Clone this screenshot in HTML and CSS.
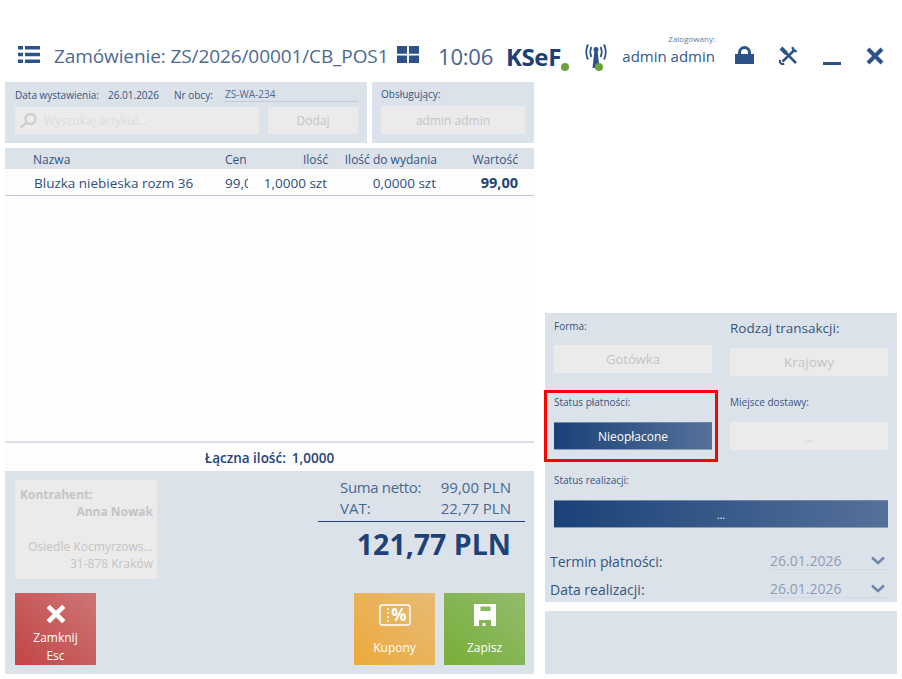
FILE: index.html
```html
<!DOCTYPE html>
<html lang="pl">
<head>
<meta charset="utf-8">
<title>Zamówienie</title>
<link rel="stylesheet" href="styles.css">
</head>
<body>
<header class="topbar">
  <svg class="ic-menu" viewBox="0 0 22 17" width="22" height="17"><path d="M0 0h5v3.4H0zM7 0h15v3.4H7zM0 6.8h5v3.4H0zM7 6.8h15v3.4H7zM0 13.6h5V17H0zM7 13.6h15V17H7z"/></svg>
  <h1 class="title">Zamówienie: ZS/2026/00001/CB_POS1</h1>
  <svg class="ic-win" viewBox="0 0 22 17" width="22" height="17"><path d="M0 0h10v7.8H0zM12 0h10v7.8H12zM0 9.4h10V17H0zM12 9.4h10V17H12z"/></svg>
  <span class="clock">10:06</span>
  <span class="ksef">KSeF<i class="dot"></i></span>
  <span class="signal">
    <svg viewBox="0 0 22 26" width="22" height="26"><path class="wave" d="M6.500 5Q4 10 6.500 15M3 2.500Q-.5 10 3 17.500M15.500 5Q18 10 15.500 15M19 2.500Q22.500 10 19 17.500"/><circle cx="11" cy="7.500" r="2.500"/><path d="M9.500 8h3l2 18h-7z"/></svg>
    <i class="dot"></i>
  </span>
  <div class="user"><small>Zalogowany:</small><span>admin admin</span></div>
  <svg class="ic-lock" viewBox="0 0 19 18" width="19" height="18"><path d="M0 8h19v10H0z"/><path class="st" d="M4.500 9V6.500a5 5 0 0 1 10 0V9" fill="none"/></svg>
  <svg class="ic-tools" viewBox="0 0 19 19" width="19" height="19"><path class="st handle" d="M2 2L7.500 7.500" fill="none"/><path class="st" d="M7 7L17 17M16 3.500L3.500 15.500" fill="none"/><path class="st jaw" d="M17.800 5A3.300 3.300 0 0 1 13.800 1M1 13.800A3.300 3.300 0 0 0 5.200 18" fill="none"/></svg>
  <span class="ic-min"></span>
  <svg class="ic-x" viewBox="0 0 18 18" width="18" height="18"><path class="st" d="M2 2l14 14M16 2L2 16" fill="none"/></svg>
</header>

<main class="layout">
  <section class="left">
    <div class="filters">
      <div class="panel doc">
        <div class="meta">
          <label>Data wystawienia:</label><span class="metaval">26.01.2026</span>
          <label class="nr">Nr obcy:</label><span class="foreign">ZS-WA-234</span>
        </div>
        <div class="searchrow">
          <div class="field search">
            <svg viewBox="0 0 18 16" width="18" height="16"><circle cx="11.500" cy="6" r="5" fill="none"/><path d="M8 9.500L1.500 14.500"/></svg>
            <span>Wyszukaj artykuł...</span>
          </div>
          <div class="field add">Dodaj</div>
        </div>
      </div>
      <div class="panel staff">
        <label>Obsługujący:</label>
        <div class="field staffbox">admin admin</div>
      </div>
    </div>

    <div class="table">
      <div class="row head">
        <span class="c-name">Nazwa</span><span class="c-price">Cen</span><span class="c-qty">Ilość</span><span class="c-out">Ilość do wydania</span><span class="c-val">Wartość</span>
      </div>
      <div class="row item">
        <span class="c-name">Bluzka niebieska rozm 36</span><span class="c-price">99,00</span><span class="c-qty">1,0000 szt</span><span class="c-out">0,0000 szt</span><span class="c-val strong">99,00</span>
      </div>
      <div class="spacer"></div>
      <div class="totalqty"><b>Łączna ilość:</b><b>1,0000</b></div>
    </div>

    <div class="panel bottom">
      <div class="bottomtop">
        <div class="customer">
          <b class="lab">Kontrahent:</b>
          <b class="name">Anna Nowak</b>
          <span class="addr">Osiedle Kocmyrzows...</span>
          <span>31-878 Kraków</span>
        </div>
        <div class="sums">
          <div class="sumrow"><span class="sumlab">Suma netto:</span><span>99,00 PLN</span></div>
          <div class="sumrow"><span>VAT:</span><span>22,77 PLN</span></div>
          <div class="grand">121,77 PLN</div>
        </div>
      </div>
      <div class="actions">
        <button class="tile red">
          <svg viewBox="0 0 22 22" width="22" height="22"><path class="st" d="M2.500 2.500l17 17M19.500 2.500l-17 17" fill="none"/></svg>
          <span>Zamknij</span><span>Esc</span>
        </button>
        <div class="grow"></div>
        <button class="tile orange">
          <svg viewBox="0 0 32 22" width="32" height="22"><rect x="1" y="1" width="30" height="20" rx="2.500" fill="none"/><path d="M9 4v2M9 8v2M9 12v2M9 16v2" fill="none"/><text x="20" y="17" text-anchor="middle">%</text></svg>
          <span class="lbl">Kupony</span>
        </button>
        <button class="tile green">
          <svg viewBox="0 0 22 22" width="22" height="22"><path fill-rule="evenodd" d="M0 0h22v22H0zM6.500 2.500v4.500h10V2.500zM5 16v6h12v-6zM8.500 19h3v3h-3z"/></svg>
          <span class="lbl">Zapisz</span>
        </button>
      </div>
    </div>
  </section>

  <aside class="right">
    <div class="panel form">
      <div class="grid">
        <div class="cell">
          <label>Forma:</label>
          <div class="field wide">Gotówka</div>
        </div>
        <div class="cell">
          <label class="big">Rodzaj transakcji:</label>
          <div class="field wide kraj">Krajowy</div>
        </div>
        <div class="cell highlighted">
          <label>Status płatności:</label>
          <div class="blue">Nieopłacone</div>
        </div>
        <div class="cell">
          <label>Miejsce dostawy:</label>
          <div class="field wide dots">...</div>
        </div>
        <div class="cell full">
          <label>Status realizacji:</label>
          <div class="blue dots">...</div>
        </div>
      </div>
      <div class="daterow"><span>Termin płatności:</span><span class="date">26.01.2026<svg viewBox="0 0 14 9" width="14" height="9"><path d="M1 1.500l6 5.500 6-5.500" fill="none"/></svg></span></div>
      <div class="daterow"><span>Data realizacji:</span><span class="date">26.01.2026<svg viewBox="0 0 14 9" width="14" height="9"><path d="M1 1.500l6 5.500 6-5.500" fill="none"/></svg></span></div>
    </div>
    <div class="panel empty"></div>
  </aside>
</main>
</body>
</html>
```
FILE: styles.css
```css
* { box-sizing: border-box; }
html, body { margin: 0; padding: 0; }
body {
  width: 902px; height: 679px; overflow: hidden; background: #fff;
  font-family: "Open Sans", "Noto Sans", sans-serif; color: #1f4479;
  padding-top: 30px;
}
.topbar { height: 52px; display: flex; align-items: center; padding-left: 18px; position: relative; }
.topbar svg { flex: none; fill: #2c5288; }
.topbar .st { stroke: #2c5288; }
.ic-menu { margin-top: -4px; }
.title { margin: 0 0 0 14px; font-size: 19px; font-weight: 400; color: #4d6a92; width: 334px; white-space: nowrap; letter-spacing: -.1px; }
.ic-win { margin-left: 9px; margin-top: -3px; }
.clock { margin-left: 19px; font-size: 22px; color: #46648f; width: 56px; letter-spacing: -.2px; }
.ksef { position: relative; margin-left: 12px; font-size: 24px; font-weight: 700; color: #1c4075; width: 61px; letter-spacing: -.4px; padding-top: 1px; }
.dot { position: absolute; width: 8px; height: 8px; border-radius: 50%; background: #6f9f3d; }
.ksef .dot { right: -2px; bottom: 2px; }
.signal { position: relative; display: block; width: 22px; height: 26px; margin-left: 18px; margin-top: -2px; }
.signal .dot { left: 10px; bottom: -3px; }
.signal .wave { fill: none; stroke: #2c5288; stroke-width: 1.800; }
.user { display: flex; flex-direction: column; align-items: flex-end; width: 95px; margin-left: 13px; font-size: 15px; color: #36588a; line-height: 19px; margin-top: -3px; }
.user small { font-size: 8px; line-height: 9px; color: #62799c; margin-bottom: 4px; margin-top: -9px; }
.ic-lock { margin-left: 20px; margin-top: -3px; }
.ic-lock .st { stroke-width: 3; }
.ic-tools { margin-left: 25px; margin-top: -2px; }
.ic-tools .st { stroke-width: 2.500; }
.ic-tools .handle { stroke-width: 4; }
.ic-tools .jaw { stroke-width: 2.200; }
.ic-min { display: block; width: 18px; height: 3px; background: #2c5288; margin-left: 25px; margin-top: 15px; }
.ic-x { margin-left: 25px; margin-top: -1px; }
.ic-x .st { stroke-width: 4; }

.layout { display: flex; padding-left: 5px; }
.left { width: 529px; display: flex; flex-direction: column; }
.right { width: 352px; margin-left: 11px; padding-top: 231px; display: flex; flex-direction: column; }

.panel { background: #dce2ea; }
label { font-size: 10px; color: #35557f; }
.filters { display: flex; gap: 5px; height: 61px; }
.doc { width: 362px; padding: 5px 9px 5px 10px; }
.meta { display: flex; align-items: center; height: 15px; white-space: nowrap; font-size: 10px; }
.meta label { width: 93px; }
.meta .nr { width: 51px; }
.metaval { width: 66px; color: #35557f; }
.foreign { width: 135px; margin-left: -2px; padding-left: 2px; color: #4f6b92; font-size: 10px; border-bottom: 1px solid #c2cbd8; height: 15px; line-height: 15px; }
.searchrow { display: flex; gap: 9px; margin-top: 5px; }
.field { background: #ebebeb; color: #c4c4c4; display: flex; align-items: center; justify-content: center; font-size: 12px; }
.search { width: 244px; height: 27px; justify-content: flex-start; padding-left: 4px; gap: 7px; color: #dcdcdc; }
.search svg { stroke: #cfcfcf; stroke-width: 2.500; fill: none; }
.add { width: 90px; height: 27px; }
.staff { width: 162px; padding: 5px 9px; }
.staff label { display: block; height: 18px; line-height: 15px; }
.staffbox { height: 28px; width: 144px; margin-top: 1px; }

.table { height: 323px; margin-top: 5px; display: flex; flex-direction: column; background: #fdfdfd; }
.row { display: flex; align-items: center; flex: none; white-space: nowrap; }
.head { height: 21px; background: #dce2ea; font-size: 12px; color: #35557f; padding-top: 1px; }
.item { height: 27px; font-size: 13.500px; color: #2f4f7c; border-bottom: 1px solid #b9c6d8; padding-top: 1px; }
.c-name { width: 219px; padding-left: 28px; }
.item .c-name { padding-left: 29px; }
.c-price { width: 23px; overflow: hidden; margin-left: 1px; }
.c-qty { width: 80px; text-align: right; }
.item .c-qty { padding-right: 1px; }
.c-out { width: 109px; text-align: right; }
.item .c-out { padding-right: 1px; }
.c-val { width: 81px; text-align: right; }
.item .strong { font-weight: 700; color: #1f4479; font-size: 14.500px; }
.spacer { flex: 1; border-bottom: 2px solid #d8dfe8; }
.totalqty { height: 28px; display: flex; align-items: center; justify-content: center; gap: 6px; font-size: 13.500px; padding-top: 1px; color: #1f4479; }
.totalqty b { font-weight: 600; }

.bottom { height: 203px; padding: 9px 9px 9px 10px; display: flex; flex-direction: column; }
.bottomtop { display: flex; height: 113px; flex: none; }
.customer { width: 142px; height: 99px; background: #ebebeb; color: #c4c4c4; font-size: 12px; display: flex; flex-direction: column; align-items: flex-end; padding: 6px 4px 0 5px; line-height: 17px; }
.customer .lab { align-self: flex-start; }
.customer .addr { margin-top: 18px; }
.sums { margin-left: 161px; width: 207px; }
.sumrow { display: flex; justify-content: space-between; font-size: 15px; color: #4a688f; height: 21px; line-height: 21px; padding: 0 14px 0 22px; }
.sumrow:first-child { margin-top: -3px; }
.sumrow:nth-child(2) { border-bottom: 1px solid #1f4479; height: 24px; padding-bottom: 3px; }
.sumlab { letter-spacing: -.35px; }
.grand { font-size: 28.500px; font-weight: 700; text-align: right; padding-right: 14px; color: #1c4277; line-height: 44px; }
.actions { display: flex; gap: 9px; }
.grow { flex: 1; }
.tile { width: 81px; height: 72px; border: 0; padding: 0; font: inherit; font-size: 12px; color: #fff; display: flex; flex-direction: column; align-items: center; }
.tile svg { margin-top: 11px; }
.tile span { line-height: 17px; }
.tile.red { background: linear-gradient(45deg, #c34545, #cd7676); }
.tile.red span:first-of-type { margin-top: 5px; }
.tile.red span:last-of-type { line-height: 19px; }
.tile.red .st { stroke: #fff; stroke-width: 5; }
.tile.orange { background: linear-gradient(45deg, #eda93c, #e6bb75); }
.tile.orange svg { stroke: #fff; stroke-width: 1.500; fill: #fff; }
.tile.orange rect, .tile.orange path { stroke: #fff; }
.tile.orange text { font-size: 17px; font-weight: 700; fill: #fff; stroke: none; }
.tile.green { background: linear-gradient(45deg, #77ae38, #94bc6e); }
.tile.green svg { fill: #fff; }
.lbl { margin-top: 13px; }

.form { height: 289px; padding: 3px 9px 0 9px; }
.grid { display: grid; grid-template-columns: 158px 158px; column-gap: 18px; }
.cell { height: 76px; position: relative; }
.cell label { display: block; height: 30px; line-height: 20px; }
.cell label.big { font-size: 13.500px; line-height: 24px; height: 32px; color: #35557f; }
.cell:nth-child(1) label { height: 29px; }
.wide { height: 28px; font-size: 13px; }
.kraj { font-size: 13.500px; }
.full { grid-column: 1 / span 2; height: 79px; }
.full label { line-height: 24px; height: 32px; }
.blue { height: 28px; background: linear-gradient(90deg, #1a4278, #557199); color: #fff; font-size: 12px; display: flex; align-items: center; justify-content: center; border-top: 1px solid #6f87a8; border-bottom: 1px solid #8da0bc; }
.dots { align-items: flex-end; padding-bottom: 5px; font-size: 10px; }
.highlighted::after { content: ""; box-sizing: border-box; position: absolute; left: -10px; top: -2px; width: 174px; height: 72px; border: 3px solid #ff0000; pointer-events: none; }
.daterow { display: flex; justify-content: space-between; align-items: center; height: 28px; margin-left: -4px; font-size: 14px; color: #35557f; }
.date { display: flex; align-items: center; justify-content: space-between; width: 118px; color: #8d9db5; font-size: 14px; border-bottom: 1px solid #d2d9e3; height: 18px; padding-right: 3px; }
.date svg { stroke: #6e86a8; stroke-width: 2.500; }
.empty { height: 63px; margin-top: 9px; }
```
